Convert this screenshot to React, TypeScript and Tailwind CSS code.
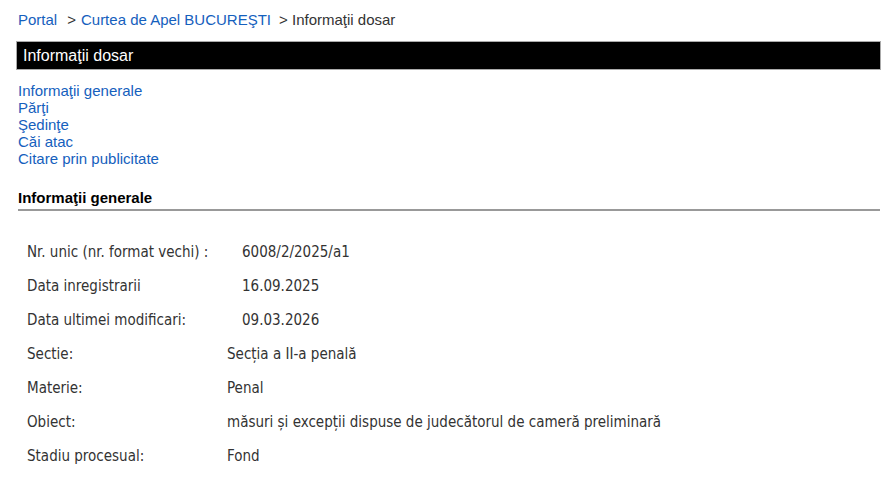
const navLinks = ["Informaţii generale", "Părţi", "Şedinţe", "Căi atac", "Citare prin publicitate"];

const firstRows = [
  ["Nr. unic (nr. format vechi) :", "6008/2/2025/a1"],
  ["Data inregistrarii", "16.09.2025"],
  ["Data ultimei modificari:", "09.03.2026"],
];

const secondRows = [
  ["Sectie:", "Secția a II-a penală"],
  ["Materie:", "Penal"],
  ["Obiect:", "măsuri și excepții dispuse de judecătorul de cameră preliminară"],
  ["Stadiu procesual:", "Fond"],
];

const tableFont = "font-['DejaVu_Sans_Condensed','DejaVu_Sans',sans-serif]";

export default function App() {
  return (
    <div className="min-h-[488px] bg-white font-['Liberation_Sans',Arial,sans-serif] text-[15px] text-[#333]">
      <div className="pl-[18px] pr-[12px] pt-[11px]">
        <div className="flex h-[18px] items-center leading-[18px]">
          <a className="text-[#1560bd]">Portal</a>
          <span className="ml-[10px] mr-[5px] text-[#333]">&gt;</span>
          <a className="text-[#1560bd]">Curtea de Apel BUCUREŞTI</a>
          <span className="ml-[8px] text-[#333]">&gt; Informaţii dosar</span>
        </div>

        <div className="mt-[12px] -ml-[2px] flex h-[29px] items-center border border-[#aaa] bg-black px-[6px] text-[16px] text-white">
          Informaţii dosar
        </div>

        <div className="mt-[12px] flex flex-col leading-[17px] text-[#1560bd]">
          {navLinks.map((l) => (
            <a key={l}>{l}</a>
          ))}
        </div>

        <div className="mt-[22px] mr-[1px] border-b-2 border-[#999] pb-[3px] font-bold leading-[17px] text-black">
          Informaţii generale
        </div>

        <div className={`mt-[24px] pl-[9px] ${tableFont} text-[15px] text-[#333]`}>
          {firstRows.map(([k, v]) => (
            <div key={k} className="flex h-[34px] items-center">
              <span className="w-[215px]">{k}</span>
              <span>{v}</span>
            </div>
          ))}
          {secondRows.map(([k, v]) => (
            <div key={k} className="flex h-[34px] items-center">
              <span className="w-[200px]">{k}</span>
              <span>{v}</span>
            </div>
          ))}
        </div>
      </div>
    </div>
  );
}
